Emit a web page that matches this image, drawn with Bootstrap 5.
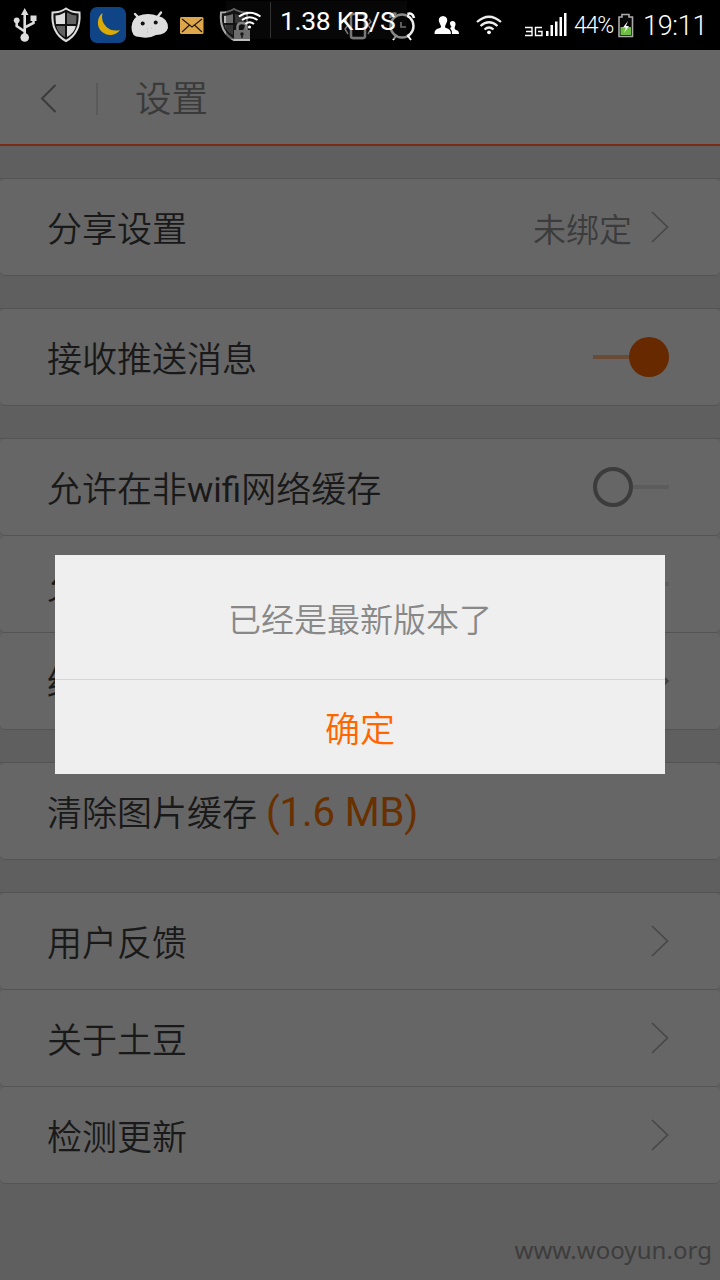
<!DOCTYPE html>
<html lang="zh-CN">
<head>
<meta charset="utf-8">
<meta name="viewport" content="width=device-width, initial-scale=1">
<title>设置</title>
<link href="https://cdn.jsdelivr.net/npm/bootstrap@5.3.0/dist/css/bootstrap.min.css" rel="stylesheet">
<style>
body{width:720px;height:1280px;background:#5f5f5f;color:#191919;font-family:Roboto,"Noto Sans CJK SC",sans-serif;font-weight:350;overflow:hidden}
svg{display:block;flex:none}
.status{height:50px;background:#000;color:#fff;font-weight:400;line-height:50px;white-space:nowrap}
.battery-pct{font-size:23px;width:39px;margin-left:5px;letter-spacing:-1.1px;padding-top:2px;font-weight:350}
.clock{font-size:27px;margin-left:8px;letter-spacing:-.3px;padding-top:1px;font-weight:350}
.speed{left:226px;top:1px;width:181px;height:38px;background:rgba(16,16,16,.45);line-height:38px;font-size:26.5px}
.speed-text{margin-left:9px;letter-spacing:-.3px;padding-top:2px}
.titlebar{height:96px;background:#666;border-bottom:2px solid #7a2c12;color:#3a3a3a;font-size:36.500px;padding:0 0 0 40px}
.title-text{padding-top:7px}
.vline{width:2px;height:32px;background:#5a5a5a;margin:0 37px 0 39px}
.groups{padding-top:32px;gap:32px}
.group{border-top:1px solid #545454}
.item{height:97px;background:#666;border:0;border-bottom:1px solid #545454;border-radius:5px;padding:0 51px 0 47px;font-size:35px;color:inherit}
.item-label{line-height:50px;padding-top:8px}
.latin{font-weight:400}
.state{font-size:33px;color:#3c3c3c;margin-right:19px;padding-top:7px}
.size{font-size:40px;font-weight:400;color:#693000;letter-spacing:-.1px;padding-top:4px;margin-left:9px}
.notice{left:55px;top:555px;width:610px;height:219px;background:#efefef;border:0;border-radius:0}
.message{height:125px;border-bottom:1px solid #d5d5d5;color:#888;font-size:33px;padding-top:7px}
.confirm{height:94px;color:#ff6600;font-size:35px;border:0;border-radius:0;padding:9px 0 0;font-weight:350}
.site{right:8px;top:1233px;color:#3d3d3d;font:400 24px/34px "Noto Sans",sans-serif;letter-spacing:.05px}
</style>
</head>
<body class="position-relative">
<header class="status d-flex align-items-center position-relative">
<svg width="270" height="50" viewBox="0 0 270 50">
 <g fill="none" stroke="#ddd" stroke-width="2.6"><path d="M24.700 36V13M24.700 31.500L16.700 26V21M24.700 27.500L33.500 23V18"/></g>
 <g fill="#ddd"><path d="M24.700 8L28.500 15H21z"/><circle cx="24.700" cy="37.500" r="4.300"/><circle cx="16.700" cy="20.300" r="2.900"/><path d="M30.500 15.500h6v5.500h-6z"/></g>
 <path d="M66 8.500Q72 12.500 79.500 12.500Q81 33 66 41Q51 33 52.500 12.500Q60 12.500 66 8.500z" fill="#111" stroke="#ddd" stroke-width="2"/>
 <path d="M65 12.500V24H56Q55.500 19 55.500 15.500Q61 15 65 12.500z" fill="#ddd"/><path d="M67 12.500V24H76Q76.500 19 76.500 15.500Q71 15 67 12.500zM65 26V37Q57.500 33 56.200 26z" fill="#626262"/><path d="M67 26V37Q74.500 33 75.800 26z" fill="#ddd"/>
 <rect x="90" y="7" width="36" height="36" rx="7" fill="#0f4587"/><path d="M102.500 13A12.300 12.300 0 1 0 120 30Q112 32 106.500 27Q100.500 21 102.500 13z" fill="#dcaa00"/>
 <path d="M139 18L135 14M157.500 17L161 12.500" stroke="#ddd" stroke-width="2.400" stroke-linecap="round"/><path d="M138 16Q148 12 158 16Q168 18 168 28Q166 35 156 35Q149 39 140 37Q131 37 131.500 27Q132 19 138 16z" fill="#ddd"/><circle cx="142.700" cy="23.500" r="2" fill="#111"/><circle cx="155.700" cy="22.500" r="2" fill="#111"/><path d="M147 29h1M151 28h1M147 32h1" stroke="#bbb"/>
 <rect x="180" y="17" width="23.500" height="17" rx="1.500" fill="#dfa74b"/><path d="M182 19l10 8 10-8M182 32l7.500-7M202 32l-7.500-7" fill="none" stroke="#241a0a" stroke-width="1.200"/>
 <path d="M234 9Q240 12.500 247 12.500Q249 32 234 40Q219 32 221 12.500Q228 12.500 234 9z" fill="#171717" stroke="#aaa" stroke-width="2"/><path d="M233 14v9h-9v-7q5-.3 9-2z" fill="#bbb"/><path d="M235 14v9h9v-7q-5-.3-9-2zM233 25v10q-7-3-8.500-10z" fill="#555"/><path d="M237.500 30v-3q0-4 4.500-4t4.500 4v3" fill="none" stroke="#ddd" stroke-width="2.500"/><rect x="234" y="30" width="16" height="11" fill="#bbb"/><circle cx="242" cy="34" r="1.800" fill="#222"/><path d="M241.200 34h1.600v4h-1.600z" fill="#222"/>
</svg>
<svg width="253" height="50" viewBox="270 0 253 50">
 <rect x="351" y="14" width="14" height="24" rx="2" fill="none" stroke="#ccc" stroke-width="2.500"/><path d="M347 19l-2 3 3 3-3 4 3 5M369 19l2 3-3 3 3 4-3 5" fill="none" stroke="#ccc" stroke-width="1.500"/>
 <circle cx="402" cy="26" r="11.500" fill="none" stroke="#eee" stroke-width="2.400"/><path d="M401 22v5h5" fill="none" stroke="#bbb" stroke-width="1.700"/><path d="M407.500 14q5-2 6.500 4" fill="none" stroke="#fff" stroke-width="2.600"/><path d="M396.500 14q-5-2-6.500 4" fill="none" stroke="#ddd" stroke-width="2.600"/><path d="M396 36l-3 4M408 36l3 4" stroke="#fff" stroke-width="2"/>
 <path d="M434.500 34Q434 29 440 28Q442 27 440 24Q438 21 439 18.500Q440 16 443 16Q446 16 447 18.500Q448 21 446 24Q444 27 446 28Q451 29 451 34z" fill="#fff"/><path d="M452 34Q452 30 450 28L451.500 27Q448 22 452 21Q456 21 455.500 25Q453.500 29 456 30Q459 30.500 459 34z" fill="#fff"/>
 <g fill="none" stroke="#eee" stroke-width="2.300"><path d="M477 22Q489 11.500 501 22M480.500 26Q489 18.500 497.500 26M484.500 29.500Q489 25.500 493.500 29.500"/></g><circle cx="489" cy="32.300" r="1.900" fill="#fff"/>
</svg>
<svg width="46" height="50" viewBox="523 0 46 50">
 <path d="M525 27.500h7v8h-7M526 31.500h6M542 27.500h-6.500v8h6.500v-4h-4" fill="none" stroke="#fff" stroke-width="1.400"/>
 <path d="M546 31h2.500v5H546zM550.500 25h2.500v11h-2.500zM555 21.500h2.500V36H555zM559.500 17h2.500v19h-2.500zM564 13h2.500v23H564z" fill="#fff"/>
</svg>
<span class="battery-pct">44%</span>
<svg class="ms-1" width="18" height="50" viewBox="617 0 18 50"><path d="M619 17h3v-2.500h7V17h3.500v19.500H619z" fill="#070707" stroke="#aaa" stroke-width="1.600"/><path d="M620.500 27h10.500v8h-10.500z" fill="#6fbd45"/><path d="M628 21l-5 6.500h3l-2 5.500 5-7h-3z" fill="#fff"/></svg>
<span class="clock">19:11</span>
<div class="speed position-absolute d-flex align-items-center">
 <svg width="44" height="38" viewBox="226 1 44 38"><g fill="none" stroke="#fff" stroke-width="2"><path d="M239 16.500Q249.500 9 260.500 16.500M242 20Q249.500 14.500 257.500 20M245.500 24Q249.500 20.500 254 24"/></g><circle cx="249.500" cy="27" r="1.600" fill="#fff"/></svg>
 <svg width="1" height="36"><path d="M.5 0v36" stroke="#333"/></svg>
 <span class="speed-text">1.38 KB/S</span>
</div>
</header>
<nav class="titlebar d-flex align-items-center">
 <svg class="mt-1" width="17" height="30" viewBox="0 0 17 30"><path d="M15.500 1L2 14.500l13.500 13.500" fill="none" stroke="#3a3a3a" stroke-width="2"/></svg>
 <span class="vline mt-1"></span><span class="title-text">设置</span>
</nav>
<main class="groups d-flex flex-column">
 <section class="group">
  <div class="item d-flex align-items-center"><span class="item-label me-auto">分享设置</span><span class="state">未绑定</span><svg width="18" height="32" viewBox="0 0 18 32"><path d="M1 1l15.500 15L1 31" fill="none" stroke="#484848" stroke-width="1.700"/></svg></div>
 </section>
 <section class="group">
  <div class="item d-flex align-items-center"><span class="item-label me-auto">接收推送消息</span><svg width="76" height="40"><path d="M0 20h40" stroke="#694b36" stroke-width="4"/><circle cx="56" cy="20" r="20" fill="#662900"/></svg></div>
 </section>
 <section class="group">
  <div class="item d-flex align-items-center"><span class="item-label me-auto">允许在非<span class="latin">wifi</span>网络缓存</span><svg width="76" height="40"><path d="M40 20h36" stroke="#5c5c5c" stroke-width="4"/><circle cx="20" cy="20" r="18" fill="none" stroke="#3c3c3c" stroke-width="4"/></svg></div>
  <div class="item d-flex align-items-center"><span class="item-label me-auto">允</span><svg width="76" height="40"><path d="M40 20h36" stroke="#5c5c5c" stroke-width="4"/></svg></div>
  <div class="item d-flex align-items-center"><span class="item-label me-auto">缓</span><svg width="18" height="32" viewBox="0 0 18 32"><path d="M1 1l15.500 15L1 31" fill="none" stroke="#414141" stroke-width="2.500"/></svg></div>
 </section>
 <section class="group">
  <div class="item d-flex align-items-center"><span class="item-label">清除图片缓存</span><span class="size">(1.6 MB)</span></div>
 </section>
 <section class="group">
  <div class="item d-flex align-items-center"><span class="item-label me-auto">用户反馈</span><svg width="18" height="32" viewBox="0 0 18 32"><path d="M1 1l15.500 15L1 31" fill="none" stroke="#484848" stroke-width="1.700"/></svg></div>
  <div class="item d-flex align-items-center"><span class="item-label me-auto">关于土豆</span><svg width="18" height="32" viewBox="0 0 18 32"><path d="M1 1l15.500 15L1 31" fill="none" stroke="#484848" stroke-width="1.700"/></svg></div>
  <div class="item d-flex align-items-center"><span class="item-label me-auto">检测更新</span><svg width="18" height="32" viewBox="0 0 18 32"><path d="M1 1l15.500 15L1 31" fill="none" stroke="#484848" stroke-width="1.700"/></svg></div>
 </section>
</main>
<div class="notice card position-absolute" role="dialog">
 <div class="message d-flex align-items-center justify-content-center">已经是最新版本了</div>
 <button class="confirm btn d-flex align-items-center justify-content-center">确定</button>
</div>
<div class="site position-absolute">www.wooyun.org</div>
<script src="https://cdn.jsdelivr.net/npm/bootstrap@5.3.0/dist/js/bootstrap.bundle.min.js"></script>
</body>
</html>
